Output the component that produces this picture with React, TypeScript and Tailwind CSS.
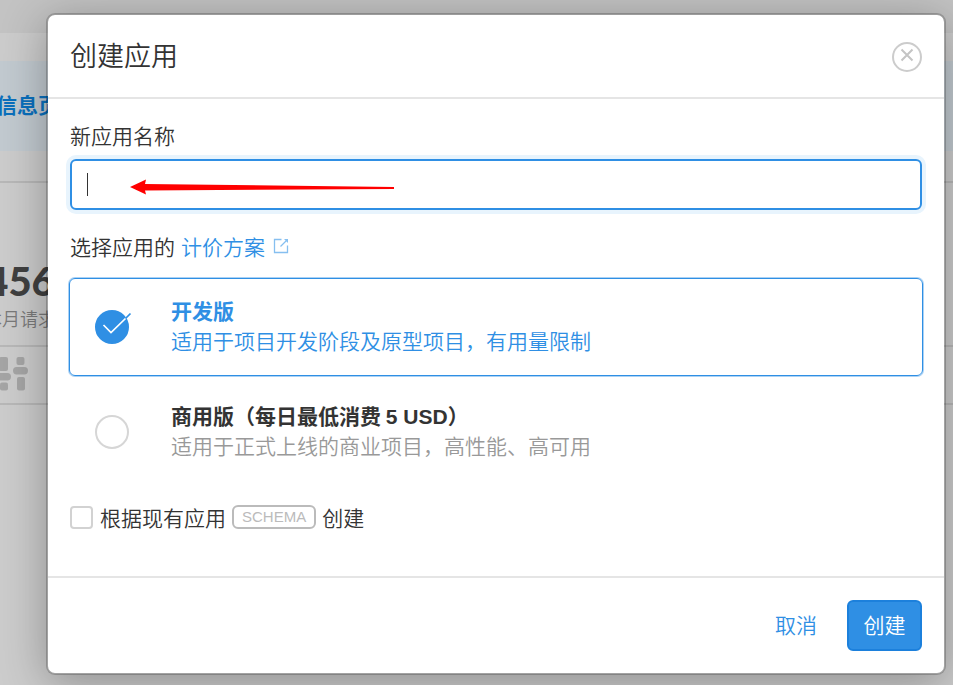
import React, { useState } from 'react';

interface PlanOptionProps {
  value: string;
  title: React.ReactNode;
  description: string;
  selected: boolean;
  onSelect: (value: string) => void;
}

function PlanOption({ value, title, description, selected, onSelect }: PlanOptionProps) {
  return (
    <label
      className={`-mx-px flex items-center gap-[42px] rounded-md border py-4 pl-[25px] pr-4 cursor-pointer ${
        selected ? 'border-[#2f8fe4] ring-1 ring-[#2f8fe4]/40' : 'border-transparent'
      }`}
    >
      <span className="relative size-[34px] shrink-0">
        <input
          type="radio"
          name="plan"
          value={value}
          checked={selected}
          onChange={() => onSelect(value)}
          className="block size-[34px] appearance-none rounded-full border-2 border-[#d6d6d6] checked:border-[#2f8fe4] checked:bg-[#2f8fe4]"
        />
        {selected && (
          <svg className="pointer-events-none absolute left-0 top-0 h-[34px] w-[38px]" viewBox="0 0 38 34" fill="none" aria-hidden>
            <path d="M8.5 15 L16 22.5 L31 8" stroke="#fff" strokeWidth="1.7" />
            <path d="M30.5 8.5 L35.5 3.5" stroke="#2f8fe4" strokeWidth="1.7" />
          </svg>
        )}
      </span>
      <span className="flex flex-col pb-1 leading-[30px]">
        <span className={`font-bold ${selected ? 'text-[#2f8fe4]' : 'text-[#333]'}`}>{title}</span>
        <span className={selected ? 'text-[#2f8fe4]' : 'text-[#999]'}>{description}</span>
      </span>
    </label>
  );
}

function Dashboard() {
  return (
    <div className="min-h-screen overflow-hidden bg-[#cccccc]" aria-hidden>
      <div className="h-[33px] bg-[#c3c3c3]" />
      <div className="mt-7 flex h-[90px] items-center bg-[#c2cad0]">
        <span className="-ml-1 whitespace-nowrap pb-0.5 text-[21px] font-bold text-[#0a70bd]">信息页</span>
      </div>
      <div className="mt-[30px] h-[164px] w-full border-t-2 border-[#b8b8b8] pt-[74px]">
        <div className="-ml-[22px] w-[84px] text-center">
          <div className="font-[Lato] text-[40px] font-black leading-[48px] text-[#404040]">456</div>
          <div className="text-[18px] leading-[26px] text-[#7a7a7a]">本月请求</div>
        </div>
      </div>
      <div className="h-[60px] border-y-2 border-[#b8b8b8] pt-[10px]">
        <svg className="h-[34px] w-[30px]" viewBox="0 0 30 34" fill="#a5a5a5">
          <rect x="-1" y="0" width="9" height="14" rx="2" />
          <rect x="-4" y="16" width="15" height="7.5" rx="3.7" />
          <rect x="0" y="25.5" width="8" height="8" rx="2" />
          <rect x="16.5" y="0" width="8" height="8" rx="2" />
          <rect x="13" y="10" width="15" height="7.5" rx="3.7" />
          <rect x="17" y="20" width="8" height="13.5" rx="2" />
        </svg>
      </div>
    </div>
  );
}

function CreateAppDialog() {
  const [name, setName] = useState('');
  const [plan, setPlan] = useState('dev');

  return (
    <form
      role="dialog"
      aria-labelledby="dialog-title"
      onSubmit={(e) => e.preventDefault()}
      className="rounded-[9px] border-2 border-black/20 bg-white bg-clip-padding shadow-[0_8px_46px_rgba(0,0,0,0.3)]"
    >
      <header className="flex h-[84px] items-center justify-between border-b-2 border-[#e5e5e5] px-[22px] pt-0.5">
        <h1 id="dialog-title" className="pb-1 text-[27px] leading-[38px]">创建应用</h1>
        <button type="button" aria-label="关闭" className="size-[30px] rounded-full border-2 border-[#ccc]">
          <svg className="size-[26px]" viewBox="0 0 26 26" fill="none" stroke="#c4c4c4" strokeWidth="2" aria-hidden>
            <path d="M7.5 5.5 L18.5 16.5 M18.5 5.5 L7.5 16.5" />
          </svg>
        </button>
      </header>

      <div className="px-[22px] pb-11 pt-[21px]">
        <label htmlFor="app-name" className="block leading-[30px]">新应用名称</label>
        <div className="relative mt-[9px]">
          <input
            id="app-name"
            type="text"
            value={name}
            onChange={(e) => setName(e.target.value)}
            className="block h-[51px] w-full rounded-md border-2 border-[#2f8fe4] px-[15px] caret-transparent outline-none ring-4 ring-[#e8f4fd]"
          />
          <span className="pointer-events-none absolute left-[17px] top-[14px] h-[23px] w-px bg-[#333]" />
          <svg className="pointer-events-none absolute left-[60px] top-5 h-4 w-[265px]" viewBox="0 0 265 16" fill="#f00" aria-hidden>
            <path d="M0 8 L16 0.5 L15 5 L264 8 V10 L15 11.5 L16 15.5 Z" />
          </svg>
        </div>

        <p className="mt-[21px] flex items-center leading-[30px]">
          选择应用的
          <a href="#pricing" className="ml-[6px] flex items-center text-[#2f8fe4]">
            计价方案
            <svg className="ml-2 size-4" viewBox="0 0 16 16" fill="none" stroke="#86bff0" strokeWidth="1.3" aria-hidden>
              <path d="M8.5 1.5 H1.5 V14.5 H14.5 V7.5" />
              <path d="M7.5 8.5 L14.5 1.5" />
              <path d="M11 1 H15 V5 Z" fill="#86bff0" stroke="none" />
            </svg>
          </a>
        </p>

        <div className="mt-[17px] flex flex-col gap-[7px]">
          <PlanOption
            value="dev"
            title="开发版"
            description="适用于项目开发阶段及原型项目，有用量限制"
            selected={plan === 'dev'}
            onSelect={setPlan}
          />
          <PlanOption
            value="business"
            title={
              <>
                商用版（每日最低消费 <span className="font-[Liberation_Sans] leading-none">5 USD</span>）
              </>
            }
            description="适用于正式上线的商业项目，高性能、高可用"
            selected={plan === 'business'}
            onSelect={setPlan}
          />
        </div>

        <label className="mt-[21px] flex items-center leading-[30px]">
          <input type="checkbox" className="mr-[7px] size-[23px] appearance-none rounded-[4px] border-2 border-[#d2d2d2]" />
          根据现有应用
          <span className="mx-[6px] h-6 rounded-md border-2 border-[#bbb] px-2 font-[Liberation_Sans] text-[15px] leading-5 text-[#bbb]">
            SCHEMA
          </span>
          创建
        </label>
      </div>

      <footer className="flex justify-end gap-[15px] border-t-2 border-[#e5e5e5] p-[22px]">
        <button type="button" className="h-[51px] w-[72px] pb-0.5 text-[#2f8fe4]">取消</button>
        <button type="submit" className="h-[51px] w-[75px] rounded-md border-2 border-[#1c80dc] bg-[#2f8fe4] pb-0.5 text-white">
          创建
        </button>
      </footer>
    </form>
  );
}

export default function App() {
  return (
    <div className="relative overflow-hidden font-['Noto_Sans_CJK_SC',sans-serif] text-[21px] font-[350] text-[#333]">
      <Dashboard />
      <div className="absolute inset-0 pb-[10px] pl-[46px] pr-[7px] pt-[13px]">
        <CreateAppDialog />
      </div>
    </div>
  );
}
